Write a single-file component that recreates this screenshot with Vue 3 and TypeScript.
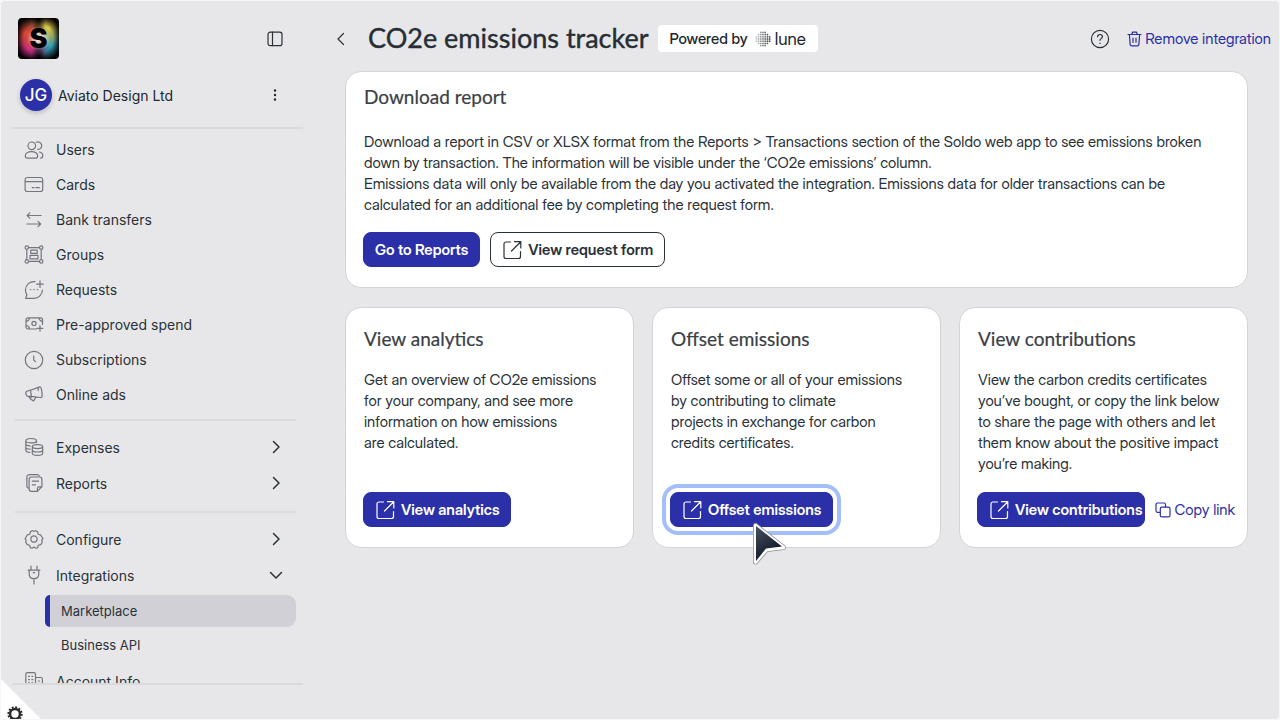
<script setup lang="ts">
interface NavItem {
  label: string
  icon: string
  chevron?: 'right' | 'down'
}

interface ActionCard {
  title: string
  text: string
  action: string
  focused?: boolean
  copy?: boolean
}

const circle = (x: number, y: number, r: number): string =>
  `M${x - r} ${y}a${r} ${r} 0 1 0 ${2 * r} 0a${r} ${r} 0 1 0 ${-2 * r} 0z`

const primary: NavItem[] = [
  {
    label: 'Users',
    icon:
      circle(7.8, 5.8, 3.8) +
      'M1.3 15.9c0-2.6 2.8-4.3 6.2-4.3s6.2 1.7 6.2 4.3c0 1.4-.8 2.2-2.1 2.2H3.4c-1.3 0-2.1-.8-2.1-2.2z' +
      'M12.2 2.2a3.8 3.8 0 1 1 1.6 7.2M15.4 12c2.1.4 3.4 1.9 3.4 3.7 0 1.5-.8 2.4-2.2 2.4',
  },
  {
    label: 'Cards',
    icon: 'M3.3 2.5h13.200a2.200 2.200 0 0 1 2.200 2.200v9.600a2.200 2.200 0 0 1-2.200 2.200H3.300a2.200 2.200 0 0 1-2.200-2.200V4.700a2.200 2.200 0 0 1 2.200-2.200zM1.100 6.700h17.600M8.300 12.700h1.800M12 12.700h3.300',
  },
  { label: 'Bank transfers', icon: 'M17.200 5.500H3.200M5.800 2.900 3.200 5.500l2.600 2.600M2.800 14h13.800M14 11.400l2.600 2.600-2.600 2.600' },
  {
    label: 'Groups',
    icon:
      circle(2.8, 2.6, 1.7) + circle(17.2, 2.6, 1.7) + circle(2.8, 16.4, 1.7) + circle(17.2, 16.4, 1.7) +
      'M4.500 2.600h11M4.500 16.400h11M2.800 4.300v10.400M17.200 4.300v10.400M6.800 5.200h6.400v3.200H6.800zM6 10.400h8v3.400H6z',
  },
  {
    label: 'Requests',
    icon: 'M11 1.600A8.500 8.500 0 0 0 1.500 10c0 2 .5 3.400 1.400 4.800L1.600 18.300H10a8.500 8.500 0 0 0 8.500-8.200M16 .9v6.600M12.700 4.200h6.600M6.300 9.600h.4M9.800 9.600h.4M13.300 9.600h.4',
  },
  {
    label: 'Pre-approved spend',
    icon:
      circle(10, 8.4, 2.1) +
      'M12.500 14H4a2 2 0 0 1-2-2V4.800a2 2 0 0 1 2-2h12.500a2 2 0 0 1 2 2V9.500M2 6.300a3.500 3.500 0 0 0 3.500-3.500M2 10.500A3.500 3.500 0 0 1 5.500 14M18.500 6.300A3.500 3.500 0 0 1 15 2.800M16 10.500v5.600M13.200 13.300h5.600',
  },
  { label: 'Subscriptions', icon: circle(10, 10, 8.7) + 'M9.700 6v3.800l1.700 1.900' },
  {
    label: 'Online ads',
    icon: 'M6.500 5.200 15 2.100c1-.4 1.700 0 2.100 1 .9 2.600 1.300 5.300 1 8-.1 1.200-.8 1.600-1.800 1.400L7.400 11.300zM6.500 5.200 3.500 6C2.200 6.400 1.600 7.300 1.900 8.500l.3 1.300c.3 1.200 1.200 1.700 2.400 1.600l2.800-.1M4.700 11.500l1 1.400M7.700 11.500l-1.500 2.200 3.400 2.300 2.200-3.600M15.200 2.200c-1 1-1.300 2.100-1 3.500',
  },
]

const secondary: NavItem[] = [
  {
    label: 'Expenses',
    chevron: 'right',
    icon: 'M1.800 3.700c0-1.300 2.400-2.200 5.300-2.200s5.300.9 5.300 2.200-2.400 2.200-5.300 2.200-5.300-.9-5.300-2.200zM1.800 3.700v9.600c0 1.200 1.700 2 4.200 2.200M12.400 3.700v2M1.800 7c0 1 1.700 1.700 4.200 1.900M1.800 10.200c0 1 1.700 1.800 4.200 2M8.300 9.600c0-1.200 2.300-2 5.200-2s5.200.8 5.200 2-2.300 2-5.200 2-5.200-.8-5.200-2zM8.300 9.600v6.700c0 1.200 2.300 2.100 5.200 2.100s5.200-.9 5.200-2.100V9.600M8.300 13c0 1.200 2.300 2 5.200 2s5.200-.8 5.200-2',
  },
  {
    label: 'Reports',
    chevron: 'right',
    icon: 'M4.300 15.200A2.200 2.200 0 0 1 2.900 13V4a2.400 2.400 0 0 1 2.400-2.400h7.800c1 0 1.700.4 2.100 1.200M7.500 4h8a2.400 2.400 0 0 1 2.400 2.400v7.300l-4.500 4.700H7.500a2.400 2.400 0 0 1-2.400-2.400V6.400A2.400 2.400 0 0 1 7.500 4zM13.400 18.300v-2.900a1.500 1.500 0 0 1 1.500-1.500h2.900M8.300 8.200h6.300M8.300 11.800h3.200',
  },
]

const settings: NavItem[] = [
  {
    label: 'Configure',
    chevron: 'right',
    icon:
      circle(10, 10, 3.1) +
      'M8 1.900c.4-.4.9-.4 1.200 0 .5.500 1.100.5 1.600 0 .3-.4.8-.4 1.200 0l1.300.6c.5.300.7.700.5 1.200-.2 1.100.7 2 1.900 1.900.5-.1.900.1 1.200.6l1.800 3.100c.2.500.1.900-.3 1.200l-.4.400a1.100 1.100 0 0 0 0 1.200c.4.500.4.900.1 1.400l-1.100 1.900c-.3.500-.7.600-1.200.5-1.100-.1-2 .8-1.900 1.900.1.500-.1.900-.6 1-1.200.6-2 .4-2.500-.3-.5-.5-1.100-.5-1.600 0-.5.700-1.300.9-2.500.3-.5-.1-.7-.5-.6-1 .1-1.100-.8-2-1.900-1.900-.5.100-.9 0-1.200-.5l-1.100-1.900c-.3-.5-.3-.9.100-1.400a1.100 1.100 0 0 0 0-1.200l-.4-.4c-.4-.3-.5-.7-.3-1.200l1.800-3.100c.3-.5.7-.7 1.200-.6 1.200.1 2.100-.8 1.900-1.900-.2-.5 0-.9.5-1.200z',
  },
  {
    label: 'Integrations',
    chevron: 'down',
    icon: 'M7 1v4M13 1v4M4.200 5.200h11.600M5.200 5.200v3.600c0 3 1.900 4.900 4.800 4.900s4.800-1.900 4.800-4.900V5.200M10 13.700V19M9.300 7.700h1.400',
  },
]

const building: string =
  'M1.800 19V3.300a1.700 1.700 0 0 1 1.700-1.700h6.300a1.700 1.700 0 0 1 1.700 1.700V19M11.500 6.500h5.200a1.700 1.700 0 0 1 1.700 1.700V19M4.500 5.300h1M7.800 5.300h1M4.500 8.600h1M7.800 8.600h1M4.500 11.900h1M7.800 11.900h1M14.500 10h1M14.500 13.200h1'

const external: string =
  'M8.500 2H4a2 2 0 0 0-2 2v12.500a2 2 0 0 0 2 2h12.500a2 2 0 0 0 2-2V11.500M12.500 1.700h6.300V8M18.500 2 9.500 11'

const chevrons: Record<'right' | 'down', string> = {
  right: 'M4.500 1.500 10 7l-5.500 5.500',
  down: 'M1.500 4.500 7 10l5.500-5.500',
}

const cards: ActionCard[] = [
  {
    title: 'View analytics',
    text: 'Get an overview of CO2e emissions\nfor your company, and see more\ninformation on how emissions\nare calculated.',
    action: 'View analytics',
  },
  {
    title: 'Offset emissions',
    text: 'Offset some or all of your emissions\nby contributing to climate\nprojects in exchange for carbon\ncredits certificates.',
    action: 'Offset emissions',
    focused: true,
  },
  {
    title: 'View contributions',
    text: 'View the carbon credits certificates\nyou’ve bought, or copy the link below\nto share the page with others and let\nthem know about the positive impact\nyou’re making.',
    action: 'View contributions',
    copy: true,
  },
]

interface Dot {
  x: number
  y: number
  r: number
  o: number
}

// Halftone globe: dots grow darker towards the right-hand side
const dots: Dot[] = []
for (let row = 0; row < 7; row++) {
  for (let col = 0; col < 7; col++) {
    const dx = col - 3
    const dy = row - 3
    if (dx * dx + dy * dy <= 10) {
      dots.push({ x: 1.4 + col * 2.2, y: 1.4 + row * 2.2, r: 0.9, o: 0.25 + col * 0.1 })
    }
  }
}
</script>

<template>
  <div class="app">
    <aside class="sidebar">
      <div class="brand">
        <span class="logo">S</span>
        <button class="bare" aria-label="Collapse sidebar">
          <svg width="16" height="16" viewBox="0 0 16 16" class="line">
            <rect x="1" y="1.200" width="14" height="13.400" rx="2.200" /><path d="M5.500 1.200v13.400" />
          </svg>
        </button>
      </div>
      <div class="account">
        <span class="avatar">JG</span>
        <span class="company">Aviato Design Ltd</span>
        <button class="bare" aria-label="Account menu">
          <svg width="16" height="16" viewBox="0 0 16 16" fill="#20272c">
            <circle cx="8" cy="3.500" r="1.200" /><circle cx="8" cy="8" r="1.200" /><circle cx="8" cy="12.500" r="1.200" />
          </svg>
        </button>
      </div>
      <nav class="nav">
        <div class="group">
          <a v-for="item in primary" :key="item.label" href="#" class="item">
            <svg width="20" height="20" viewBox="0 0 20 20" class="icon"><path :d="item.icon" /></svg>
            {{ item.label }}
          </a>
        </div>
        <div class="group roomy">
          <a v-for="item in secondary" :key="item.label" href="#" class="item">
            <svg width="20" height="20" viewBox="0 0 20 20" class="icon"><path :d="item.icon" /></svg>
            {{ item.label }}
            <svg v-if="item.chevron" width="14" height="14" viewBox="0 0 14 14" class="chevron">
              <path :d="chevrons[item.chevron]" />
            </svg>
          </a>
        </div>
        <div class="group roomy">
          <a v-for="item in settings" :key="item.label" href="#" class="item">
            <svg width="20" height="20" viewBox="0 0 20 20" class="icon"><path :d="item.icon" /></svg>
            {{ item.label }}
            <svg v-if="item.chevron" width="14" height="14" viewBox="0 0 14 14" class="chevron">
              <path :d="chevrons[item.chevron]" />
            </svg>
          </a>
          <div class="sub">
            <a href="#" class="subitem current">Marketplace</a>
            <a href="#" class="subitem">Business API</a>
          </div>
          <a href="#" class="item">
            <svg width="20" height="20" viewBox="0 0 20 20" class="icon"><path :d="building" /></svg>
            Account Info
          </a>
        </div>
      </nav>
      <div class="foot"></div>
    </aside>

    <main class="main">
      <header class="header">
        <button class="bare back" aria-label="Back">
          <svg width="14" height="14" viewBox="0 0 14 14" class="line"><path d="M9.500 1.500 4 7l5.500 5.500" /></svg>
        </button>
        <h1>CO2e emissions tracker</h1>
        <span class="powered">
          Powered by
          <span class="lune">
            <svg width="16" height="16" viewBox="0 0 16 16" fill="#1c2227">
              <circle v-for="(d, i) in dots" :key="i" :cx="d.x" :cy="d.y" :r="d.r" :opacity="d.o" />
            </svg>
            lune
          </span>
        </span>
        <button class="bare help" aria-label="Help">
          <svg width="20" height="20" viewBox="0 0 20 20" class="line">
            <circle cx="10" cy="10" r="8.600" />
            <path d="M7.600 7.700A2.400 2.400 0 0 1 10 5.500c1.400 0 2.400.9 2.400 2.200 0 1.900-2.400 1.900-2.400 3.600M10 14v.4" />
          </svg>
        </button>
        <button class="bare link">
          <svg width="15" height="16" viewBox="0 0 15 16" class="line">
            <path d="M1 3.500h13M4.700 3.500l.8-2.300h4l.8 2.300M2.400 3.500l.7 9.900c.1 1 .6 1.500 1.600 1.500h5.600c1 0 1.500-.5 1.600-1.500l.7-9.900M6 7v4.300M9 7v4.300" />
          </svg>
          Remove integration
        </button>
      </header>

      <div class="content">
        <section class="card">
          <h2>Download report</h2>
          <p class="intro">{{ 'Download a report in CSV or XLSX format from the Reports > Transactions section of the Soldo web app to see emissions broken\ndown by transaction. The information will be visible under the ‘CO2e emissions’ column.\nEmissions data will only be available from the day you activated the integration. Emissions data for older transactions can be\ncalculated for an additional fee by completing the request form.' }}</p>
          <div class="actions">
            <button class="btn">Go to Reports</button>
            <button class="btn outline">
              <svg width="20" height="20" viewBox="0 0 20 20" class="line"><path :d="external" /></svg>
              View request form
            </button>
          </div>
        </section>

        <div class="grid">
          <section v-for="card in cards" :key="card.title" class="card small">
            <h2>{{ card.title }}</h2>
            <p>{{ card.text }}</p>
            <div class="actions bottom">
              <button class="btn" :class="{ focused: card.focused, tight: card.copy }">
                <svg width="20" height="20" viewBox="0 0 20 20" class="line"><path :d="external" /></svg>
                {{ card.action }}
                <svg v-if="card.focused" class="cursor" width="36" height="44" viewBox="0 0 36 44">
                  <defs>
                    <linearGradient id="pointer" x1="0" y1="0" x2="0.5" y2="1">
                      <stop offset="0" stop-color="#4a5262" /><stop offset="1" stop-color="#0b1120" />
                    </linearGradient>
                  </defs>
                  <path d="M3.500 3.500v36.500L14.500 27.500l17-2z" fill="none" stroke="#8b8d92" stroke-width="5" stroke-linejoin="round" />
                  <path d="M3.500 3.500v36.500L14.500 27.500l17-2z" fill="url(#pointer)" stroke="#fff" stroke-width="3.500" stroke-linejoin="round" />
                  <path d="M4 4v35L14 26.500l16-2z" fill="url(#pointer)" />
                </svg>
              </button>
              <button v-if="card.copy" class="bare link">
                <svg width="16" height="16" viewBox="0 0 16 16" class="line">
                  <path d="M5 10.300H2.500a1.500 1.500 0 0 1-1.500-1.500V2.500A1.500 1.500 0 0 1 2.500 1H9a1.500 1.500 0 0 1 1.500 1.500v2.300" />
                  <rect x="5.300" y="5.200" width="9.700" height="9.700" rx="1.500" />
                </svg>
                Copy link
              </button>
            </div>
          </section>
        </div>
      </div>
    </main>

    <button class="corner" aria-label="Preferences">
      <svg width="18" height="18" viewBox="0 0 16 16" fill="none" stroke="#2b2c2e">
        <circle cx="8" cy="8" r="4.400" stroke-width="2.200" />
        <circle cx="8" cy="8" r="5.900" stroke-width="1.800" stroke-dasharray="1.700 1.390" />
      </svg>
    </button>
  </div>
</template>

<style>
body {
  margin: 0;
  background: #f6f6f7;
}
</style>

<style scoped>
.app {
  box-sizing: border-box;
  position: relative;
  display: flex;
  height: 100vh;
  border: 1px solid #f6f6f7;
  border-radius: 5px;
  overflow: hidden;
  background: #e7e7e9;
  color: #2a3238;
  font-family: Inter, "Liberation Sans", sans-serif;
  font-size: 14px;
}
button {
  font: inherit;
  cursor: pointer;
}
svg {
  flex: none;
}
a {
  color: inherit;
  text-decoration: none;
}
.line,
.icon,
.chevron {
  fill: none;
  stroke: currentColor;
  stroke-width: 1.2;
  stroke-linecap: round;
  stroke-linejoin: round;
}
.bare {
  display: flex;
  align-items: center;
  padding: 0;
  border: 0;
  background: none;
  color: #2a3238;
}
.sidebar {
  display: flex;
  flex: none;
  flex-direction: column;
  width: 302px;
  box-sizing: border-box;
  padding-left: 11px;
}
.brand,
.account {
  display: flex;
  align-items: center;
  padding: 0 20px 0 8px;
}
.brand {
  justify-content: space-between;
  padding: 17px 20px 0 6px;
}
.logo {
  display: flex;
  align-items: center;
  justify-content: center;
  width: 41px;
  height: 41px;
  border-radius: 4px;
  background:
    radial-gradient(circle at 50% 50%, transparent 50%, #000 86%),
    radial-gradient(ellipse at 50% 0, #000 0, transparent 26%),
    radial-gradient(ellipse at 50% 100%, #000 0, transparent 26%),
    radial-gradient(circle at 50% 50%, #fff 0, transparent 42%),
    radial-gradient(circle at 20% 36%, #e5482f 0, transparent 46%),
    radial-gradient(circle at 74% 24%, #e6cf4a 0, transparent 46%),
    radial-gradient(circle at 22% 74%, #e0288f 0, transparent 50%),
    radial-gradient(circle at 80% 68%, #2aa5c4 0, transparent 50%),
    #333;
  box-shadow: inset 0 0 4px #000;
  color: #000;
  font-size: 27px;
  font-weight: 900;
}
.account {
  gap: 6px;
  padding-top: 20px;
  padding-bottom: 16px;
  border-bottom: 2px solid #d9d9dc;
}
.avatar {
  display: flex;
  align-items: center;
  justify-content: center;
  width: 32px;
  height: 32px;
  border-radius: 50%;
  background: #2b30a8;
  box-shadow: 0 2px 5px #0003;
  color: #fff;
  font-size: 17px;
  font-weight: 500;
}
.company {
  flex: 1;
  color: #20272c;
}
.nav {
  flex: 1;
  min-height: 0;
  overflow: hidden;
  padding-right: 7px;
  padding-left: 3px;
}
.group {
  padding: 3px 0 7px;
}
.group + .group {
  border-top: 2px solid #dadadd;
}
.item {
  display: flex;
  align-items: center;
  gap: 12px;
  height: 35px;
  padding-left: 9px;
}
.group + .roomy {
  padding: 8px 0 10px;
}
.roomy .item {
  height: 36px;
}
.icon {
  color: #74767e;
}
.chevron {
  margin-right: 13px;
  margin-left: auto;
  stroke-width: 1.5;
}
.sub {
  padding: 2px 0 2px 30px;
}
.subitem {
  display: flex;
  align-items: center;
  height: 32px;
  padding-left: 16px;
  font-size: 13px;
}
.subitem + .subitem {
  margin-top: 2px;
}
.current {
  padding-left: 11px;
  border-left: 5px solid #2b30a8;
  border-radius: 5px 9px 9px 5px;
  background: #d1d0d6;
}
.foot {
  flex: none;
  height: 34px;
  border-top: 2px solid #dadadd;
}
.main {
  flex: 1;
  min-width: 0;
  font-family: "Inter Display", Inter, "Liberation Sans", sans-serif;
  font-size: 15px;
}
.header {
  display: flex;
  align-items: center;
  height: 70px;
  box-sizing: border-box;
  padding: 5px 8px 0 31px;
}
.back {
  margin-right: 20px;
}
h1,
h2 {
  margin: 0;
  font-family: Lato, "Open Sans", sans-serif;
  font-weight: 400;
}
h1 {
  padding-bottom: 2px;
  color: #262e35;
  font-size: 27px;
  line-height: 34px;
  white-space: nowrap;
  -webkit-text-stroke: 0.4px;
}
h2 {
  color: #3a4046;
  font-size: 19px;
  line-height: 26px;
  -webkit-text-stroke: 0.2px;
}
.powered {
  display: flex;
  align-items: center;
  gap: 7px;
  height: 27px;
  margin-left: 9px;
  padding: 0 12px;
  border-radius: 4px;
  background: #fff;
  color: #20272c;
  font-weight: 500;
  white-space: nowrap;
}
.lune {
  display: flex;
  align-items: center;
  gap: 4px;
  font-size: 17px;
  font-weight: 400;
  line-height: 20px;
}
.help {
  margin-right: 17px;
  margin-left: auto;
}
.link {
  gap: 3px;
  color: #2b30a8;
  white-space: nowrap;
}
.content {
  padding: 0 31px 24px 42px;
}
.card {
  display: flex;
  flex-direction: column;
  box-sizing: border-box;
  padding: 12px 17px 20px;
  border: 1px solid #d4d4d7;
  border-radius: 16px;
  background: #fff;
}
.card h2,
.card p {
  padding-left: 1px;
}
.card p {
  margin: 0;
  line-height: 21px;
  white-space: pre-line;
}
.card .intro {
  margin: 21px 0 17px;
}
.actions {
  display: flex;
  align-items: center;
  gap: 10px;
}
.grid {
  display: grid;
  grid-template-columns: repeat(3, minmax(0, 1fr));
  gap: 18px;
  margin-top: 19px;
}
.small {
  min-height: 241px;
  padding-top: 18px;
}
.small p {
  margin: 17px 0 16px;
}
.bottom {
  margin-top: auto;
}
.btn {
  position: relative;
  display: flex;
  align-items: center;
  gap: 6px;
  height: 35px;
  padding: 0 11px;
  border: 1px solid #2b30a8;
  border-radius: 8px;
  background: #2b30a8;
  color: #fff;
  font-weight: 600;
  white-space: nowrap;
}
.outline {
  border-color: #2a3238;
  background: #fff;
  color: #2a3238;
}
.tight {
  padding-right: 2px;
}
.focused {
  outline: 4px solid #a4bdfb;
  outline-offset: 4px;
}
.cursor {
  position: absolute;
  top: 29px;
  left: 81px;
}
.corner {
  position: absolute;
  bottom: 0;
  left: 0;
  width: 40px;
  height: 40px;
  padding: 26px 0 0 5px;
  border: 0;
  background: #fff;
  clip-path: polygon(0 0, 100% 100%, 0 100%);
  text-align: left;
  overflow: hidden;
}
</style>
